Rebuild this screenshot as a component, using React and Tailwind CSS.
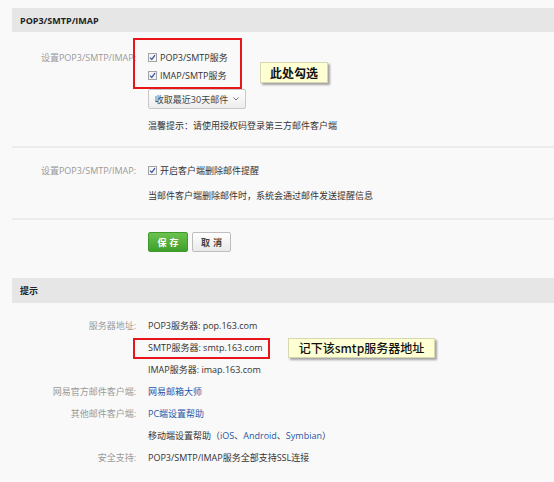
import React from "react";

const font = { fontFamily: '"Open Sans", "Noto Sans CJK SC", sans-serif' };

function Check() {
  return (
    <span className="inline-flex w-[9px] h-[9px] border border-[#a3a3a3] bg-[#f4f4f4] items-center justify-center shrink-0">
      <svg width="7" height="7" viewBox="0 0 7 7">
        <path d="M1 3.6 L2.8 5.4 L6 1.2" fill="none" stroke="#2d4e9c" strokeWidth="1.2" />
      </svg>
    </span>
  );
}

function Row({ label, children, className = "" }) {
  return (
    <div className={"flex items-center " + className}>
      <div className="w-[136px] text-right text-[#9a9a9a] shrink-0">{label}</div>
      <div className="ml-[12px] flex items-center text-[#333]">{children}</div>
    </div>
  );
}

export default function App() {
  return (
    <div
      className="relative min-h-[482px] w-[554px] bg-[#f9f9f9] pt-2 text-[9px] leading-none overflow-hidden"
      style={font}
    >
      <div className="ml-3 h-6 bg-[#e6e6e6] flex items-center pl-2 font-bold text-[#222]">
        POP3/SMTP/IMAP
      </div>

      <Row label="设置POP3/SMTP/IMAP:" className="mt-4 h-[18px]">
        <Check />
        <span className="ml-[3px]">POP3/SMTP服务</span>
      </Row>
      <Row label="" className="h-[18px]">
        <Check />
        <span className="ml-[3px]">IMAP/SMTP服务</span>
      </Row>
      <Row label="" className="mt-[5px] h-5">
        <div className="h-5 w-[98px] flex items-center justify-center gap-[5px] border border-[#c8c8c8] rounded-[2px] bg-gradient-to-b from-white to-[#ededed] text-[#444]">
          <span>收取最近30天邮件</span>
          <svg width="6" height="4" viewBox="0 0 6 4">
            <path d="M0.5 0.5 L3 3 L5.5 0.5" fill="none" stroke="#666" strokeWidth="0.9" />
          </svg>
        </div>
      </Row>
      <Row label="" className="mt-[7px] h-[18px]">
        <span>温馨提示：请使用授权码登录第三方邮件客户端</span>
      </Row>
      <div className="ml-3 mt-3 h-[2px] bg-[#ececec]" />

      <Row label="设置POP3/SMTP/IMAP:" className="mt-[13px] h-[18px]">
        <Check />
        <span className="ml-[3px]">开启客户端删除邮件提醒</span>
      </Row>
      <Row label="" className="mt-[7px] h-[18px]">
        <span>当邮件客户端删除邮件时，系统会通过邮件发送提醒信息</span>
      </Row>
      <div className="ml-3 mt-[14px] h-[2px] bg-[#ececec]" />

      <Row label="" className="mt-3 h-5">
        <button className="h-5 w-[40px] rounded-[2px] border border-[#3e9a2c] bg-gradient-to-b from-[#6cc24f] to-[#3f9f2b] text-white font-bold tracking-[3px] pl-[3px]">
          保存
        </button>
        <button className="ml-[4px] h-5 w-[39px] rounded-[2px] border border-[#bdbdbd] bg-gradient-to-b from-white to-[#e9e9e9] text-[#444] font-bold tracking-[3px] pl-[3px]">
          取消
        </button>
      </Row>

      <div className="ml-3 mt-[26px] h-[25px] bg-[#e6e6e6] flex items-center pl-2 font-bold text-[#222]">
        提示
      </div>

      <div className="mt-[11px]">
        <Row label="服务器地址:" className="h-[22px]">
          <span>POP3服务器: pop.163.com</span>
        </Row>
        <Row label="" className="h-[22px]">
          <span>SMTP服务器: smtp.163.com</span>
        </Row>
        <Row label="" className="h-[22px]">
          <span>IMAP服务器: imap.163.com</span>
        </Row>
        <Row label="网易官方邮件客户端:" className="h-[22px]">
          <span className="text-[#2656a8]">网易邮箱大师</span>
        </Row>
        <Row label="其他邮件客户端:" className="h-[22px]">
          <span className="text-[#2656a8]">PC端设置帮助</span>
        </Row>
        <Row label="" className="h-[22px]">
          <span>
            移动端设置帮助（
            <span className="text-[#2656a8]">iOS</span>、
            <span className="text-[#2656a8]">Android</span>、
            <span className="text-[#2656a8]">Symbian</span>）
          </span>
        </Row>
        <Row label="安全支持:" className="h-[22px]">
          <span>POP3/SMTP/IMAP服务全部支持SSL连接</span>
        </Row>
      </div>

      {/* annotations */}
      <div className="absolute left-[133px] top-[38px] w-[109px] h-[51px] border-2 border-[#e8161b]" />
      <div
        className="absolute left-[260px] top-[62px] w-[68px] h-[21px] bg-[#ffffd4] border border-[#d8d8b0] shadow-[2px_2px_2px_rgba(0,0,0,0.35)] flex items-center justify-center text-[12px] font-bold text-[#111]"
        style={{ fontFamily: '"Noto Sans CJK SC", sans-serif' }}
      >
        此处勾选
      </div>
      <div className="absolute left-[133px] top-[338px] w-[137px] h-[21px] border-2 border-[#e8161b]" />
      <div
        className="absolute left-[288px] top-[338px] w-[147px] h-[20px] bg-[#ffffd4] border border-[#d8d8b0] shadow-[2px_2px_2px_rgba(0,0,0,0.35)] flex items-center justify-center text-[12px] font-medium text-[#111]"
        style={{ fontFamily: '"Noto Sans CJK SC", sans-serif' }}
      >
        记下该smtp服务器地址
      </div>
    </div>
  );
}
